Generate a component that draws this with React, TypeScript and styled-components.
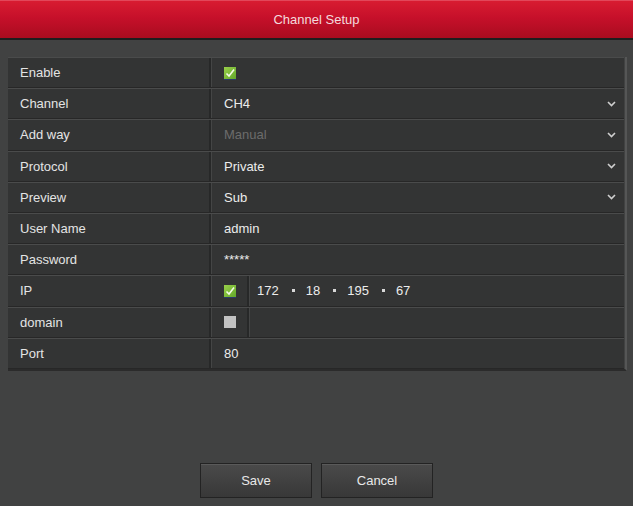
import { createGlobalStyle } from 'styled-components';
import styled from 'styled-components';

const GlobalStyle = createGlobalStyle`
  html, body {
    margin: 0;
    padding: 0;
    background: #414242;
  }
  body {
    font-family: 'Liberation Sans', Arial, sans-serif;
    font-size: 13px;
    color: #e6e6e6;
  }
`;

type Row =
  | { label: string; kind: 'check'; checked: boolean }
  | { label: string; kind: 'select'; value: string; disabled?: boolean }
  | { label: string; kind: 'text'; value: string }
  | { label: string; kind: 'ip'; checked: boolean; parts: string[] }
  | { label: string; kind: 'domain'; checked: boolean };

const rows: Row[] = [
  { label: 'Enable', kind: 'check', checked: true },
  { label: 'Channel', kind: 'select', value: 'CH4' },
  { label: 'Add way', kind: 'select', value: 'Manual', disabled: true },
  { label: 'Protocol', kind: 'select', value: 'Private' },
  { label: 'Preview', kind: 'select', value: 'Sub' },
  { label: 'User Name', kind: 'text', value: 'admin' },
  { label: 'Password', kind: 'text', value: '*****' },
  { label: 'IP', kind: 'ip', checked: true, parts: ['172', '18', '195', '67'] },
  { label: 'domain', kind: 'domain', checked: false },
  { label: 'Port', kind: 'text', value: '80' },
];

const CheckBox = ({ checked }: { checked: boolean }) =>
  checked ? (
    <StyledBox $checked>
      <svg width="12" height="12" viewBox="0 0 12 12">
        <path d="M2.5 6.5 L5 9 L10 2.5" stroke="#f4fbe8" strokeWidth="1.6" fill="none" />
      </svg>
    </StyledBox>
  ) : (
    <StyledBox />
  );

const Chevron = () => (
  <StyledChevron>
    <svg width="9" height="6" viewBox="0 0 9 6">
      <path d="M1 1 L4.5 4.5 L8 1" stroke="#cfcfcf" strokeWidth="1.6" fill="none" />
    </svg>
  </StyledChevron>
);

const renderValue = (row: Row) => {
  switch (row.kind) {
    case 'check':
      return (
        <StyledValue>
          <CheckBox checked={row.checked} />
        </StyledValue>
      );
    case 'select':
      return (
        <StyledValue>
          <StyledText $disabled={row.disabled}>{row.value}</StyledText>
          <Chevron />
        </StyledValue>
      );
    case 'text':
      return (
        <StyledValue>
          <StyledText>{row.value}</StyledText>
        </StyledValue>
      );
    case 'ip':
      return (
        <StyledSplit>
          <StyledBoxCell>
            <CheckBox checked={row.checked} />
          </StyledBoxCell>
          <StyledIpCell>
            {row.parts.map((p, i) => (
              <StyledIpPart key={i}>
                {i > 0 && <StyledDot />}
                <span>{p}</span>
              </StyledIpPart>
            ))}
          </StyledIpCell>
        </StyledSplit>
      );
    case 'domain':
      return (
        <StyledSplit>
          <StyledBoxCell>
            <CheckBox checked={row.checked} />
          </StyledBoxCell>
          <StyledIpCell />
        </StyledSplit>
      );
  }
};

const ChannelSetup = () => (
  <>
    <GlobalStyle />
    <StyledPage>
      <StyledHeader>Channel Setup</StyledHeader>
      <StyledBody>
        <StyledTable>
          {rows.map((row) => (
            <StyledRow key={row.label}>
              <StyledLabel>{row.label}</StyledLabel>
              {renderValue(row)}
            </StyledRow>
          ))}
        </StyledTable>
        <StyledFooter>
          <StyledButton>Save</StyledButton>
          <StyledButton>Cancel</StyledButton>
        </StyledFooter>
      </StyledBody>
    </StyledPage>
  </>
);

export default ChannelSetup;

const StyledPage = styled.div`
  width: 633px;
  height: 506px;
  display: flex;
  flex-direction: column;
  background: #414242;
  overflow: hidden;
`;

const StyledHeader = styled.div`
  height: 37px;
  flex: none;
  display: flex;
  align-items: center;
  justify-content: center;
  background: linear-gradient(#d81c31 0%, #c6102a 45%, #a90c1f 100%);
  border-top: 1px solid #e2475a;
  border-bottom: 2px solid #1e1e1e;
  color: #f4dadd;
  font-size: 13px;
`;

const StyledBody = styled.div`
  flex: 1;
  display: flex;
  flex-direction: column;
  padding: 17px 6px 8px 8px;
`;

const StyledTable = styled.div`
  display: flex;
  flex-direction: column;
  border-right: 2px solid #555656;
  border-bottom: 2px solid #2b2b2b;
  padding-right: 1px;
`;

const StyledRow = styled.div`
  height: 29.2px;
  display: flex;
  background: #333434;
  border-top: 1px solid #4a4b4b;
  border-bottom: 1px solid #272727;
`;

const StyledLabel = styled.div`
  width: 203px;
  flex: none;
  display: flex;
  align-items: center;
  padding-left: 12px;
  box-sizing: border-box;
  border-right: 2px solid #272828;
  color: #e4e4e4;
`;

const StyledValue = styled.div`
  flex: 1;
  display: flex;
  align-items: center;
  padding-left: 12px;
  padding-right: 6px;
  border-left: 1px solid #444545;
`;

const StyledText = styled.span<{ $disabled?: boolean }>`
  flex: 1;
  color: ${({ $disabled }) => ($disabled ? '#6c6c6c' : '#ececec')};
`;

const StyledChevron = styled.span`
  display: flex;
  align-items: center;
  padding-right: 2px;
`;

const StyledSplit = styled.div`
  flex: 1;
  display: flex;
  border-left: 1px solid #444545;
`;

const StyledBoxCell = styled.div`
  width: 37px;
  flex: none;
  display: flex;
  align-items: center;
  padding-left: 12px;
  box-sizing: border-box;
  border-right: 2px solid #272828;
`;

const StyledIpCell = styled.div`
  flex: 1;
  display: flex;
  align-items: center;
  padding-left: 7px;
  border-left: 1px solid #444545;
  color: #ececec;
`;

const StyledIpPart = styled.span`
  display: flex;
  align-items: center;
  gap: 11px;
  margin-right: 13px;
`;

const StyledDot = styled.span`
  width: 3px;
  height: 3px;
  background: #d8d8d8;
`;

const StyledBox = styled.span<{ $checked?: boolean }>`
  width: 12px;
  height: 12px;
  display: flex;
  align-items: center;
  justify-content: center;
  background: ${({ $checked }) =>
    $checked ? 'linear-gradient(135deg, #9ad04a, #62a82a)' : '#c2c2c2'};
  box-shadow: ${({ $checked }) => ($checked ? '0 1px 0 #2a3a6a' : 'none')};
`;

const StyledFooter = styled.div`
  margin-top: auto;
  display: flex;
  justify-content: center;
  gap: 9px;
  padding-right: 2px;
`;

const StyledButton = styled.button`
  width: 112px;
  height: 35px;
  background: linear-gradient(#4a4a4a, #383838);
  border: 1px solid #232323;
  box-shadow: inset 0 1px 0 #5a5a5a;
  color: #e8e8e8;
  font-family: 'Liberation Sans', Arial, sans-serif;
  font-size: 13px;
  padding: 0;
`;
